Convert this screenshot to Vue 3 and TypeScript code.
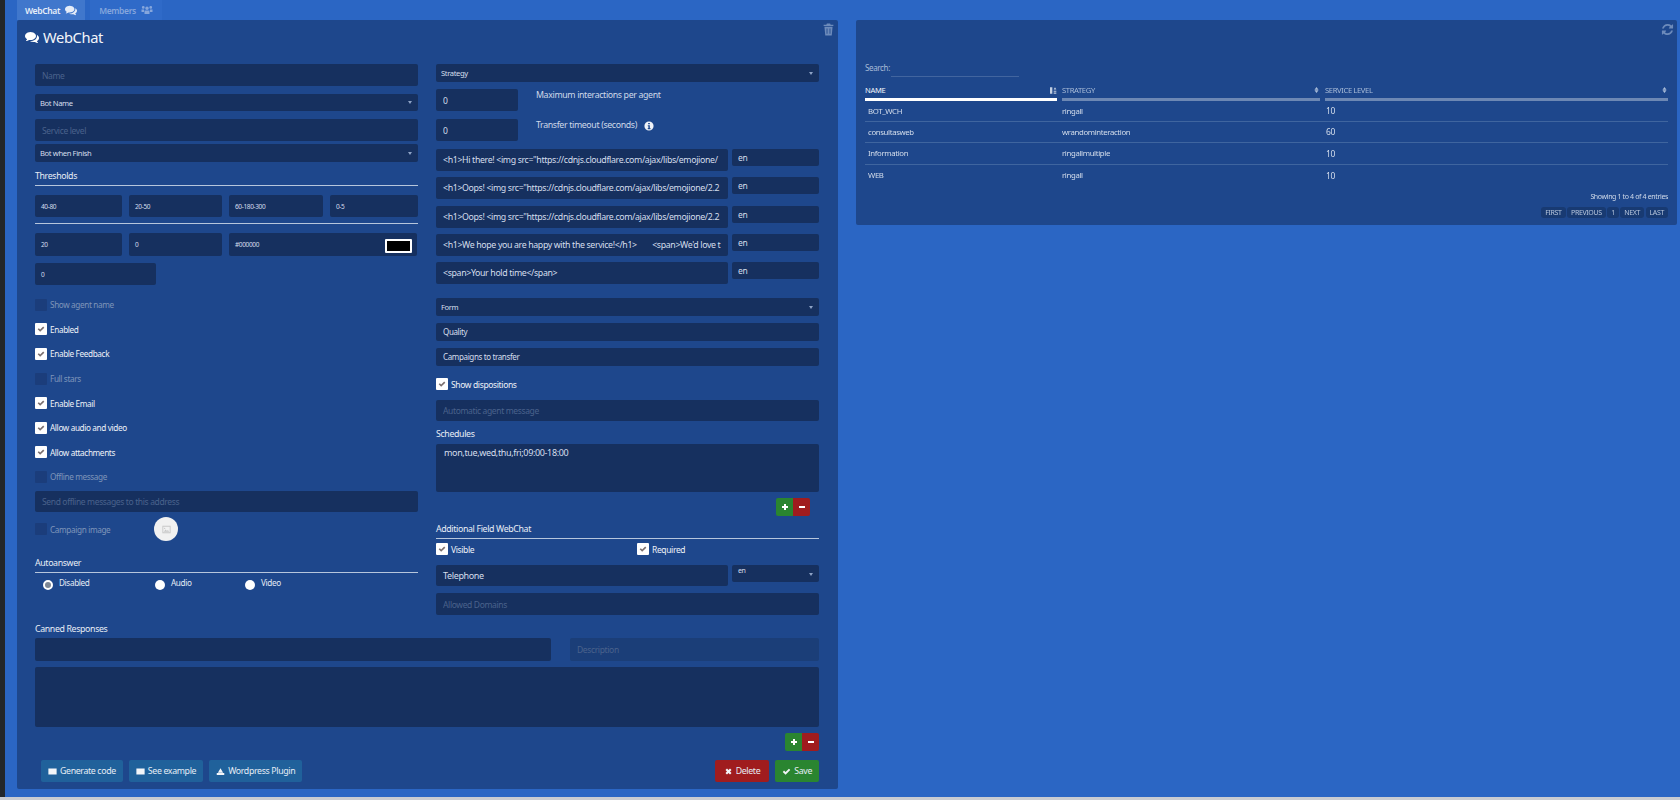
<template>
  <div class="page">
    <div class="strip"></div>
    <div class="main">
      <nav class="tabs">
        <a class="tab tab-active">
          WebChat
          <svg class="tab-icon" viewBox="0 0 1792 1792"><path :d="icons.comments" /></svg>
        </a>
        <a class="tab">
          Members
          <svg class="tab-icon" viewBox="0 0 24 24"><path :d="icons.users" /></svg>
        </a>
      </nav>

      <div class="panels">
        <section class="panel panel-form">
          <svg class="corner-icon trash" viewBox="0 0 24 24"><path fill-rule="evenodd" :d="icons.trash" /></svg>
          <h2 class="title">
            <svg viewBox="0 0 1792 1792"><path :d="icons.comments" /></svg>
            WebChat
          </h2>

          <div class="columns">
            <div class="column">
              <input class="field h22" placeholder="Name" />
              <div class="select h17 mt8"><span>Bot Name</span><i class="caret"></i></div>
              <input class="field h22 mt8" placeholder="Service level" />
              <div class="select h18 mt3"><span>Bot when Finish</span><i class="caret"></i></div>

              <h3 class="section thresholds">Thresholds</h3>
              <div class="limits mt9">
                <div v-for="v in thresholds" :key="v" class="tiny h22">{{ v }}</div>
              </div>
              <hr class="rule" />
              <div class="limits limits-color mt9">
                <div class="tiny h23">20</div>
                <div class="tiny h23">0</div>
                <div class="tiny h23 color-cell">#000000<span class="swatch"></span></div>
              </div>
              <div class="tiny h22 short mt7">0</div>

              <div class="checks">
                <label v-for="c in leftChecks" :key="c.label" class="check check-row" :class="{ off: !c.on }">
                  <span class="box">
                    <svg v-if="c.on" viewBox="0 0 24 24"><path :d="icons.check" /></svg>
                  </span>
                  {{ c.label }}
                </label>
              </div>

              <input class="field h21 offline" placeholder="Send offline messages to this address" />
              <div class="campaign">
                <label class="check off"><span class="box"></span>Campaign image</label>
                <span class="upload">
                  <svg viewBox="0 0 24 24"><path fill-rule="evenodd" :d="icons.picture" /></svg>
                </span>
              </div>

              <h3 class="section autoanswer">Autoanswer</h3>
              <div class="radios">
                <label v-for="r in radios" :key="r" class="radio">
                  <span class="dot" :class="{ chosen: r === 'Disabled' }"></span>{{ r }}
                </label>
              </div>
            </div>

            <div class="column">
              <div class="select h18"><span>Strategy</span><i class="caret"></i></div>
              <div class="numeric mt7">
                <input class="field h22" value="0" />
                <span>Maximum interactions per agent</span>
              </div>
              <div class="numeric mt8">
                <input class="field h22" value="0" />
                <span>Transfer timeout (seconds)
                  <svg class="info" viewBox="0 0 24 24"><path fill-rule="evenodd" :d="icons.info" /></svg>
                </span>
              </div>

              <div class="messages mt8">
                <div v-for="(m, i) in messages" :key="i" class="message">
                  <div class="field-text h22">{{ m }}</div>
                  <div class="lang">en</div>
                </div>
              </div>

              <div class="select h18 mt14"><span>Form</span><i class="caret"></i></div>
              <div class="field-text compact h18 mt7">Quality</div>
              <div class="field-text compact h18 mt7">Campaigns to transfer</div>
              <label class="check disp"><span class="box"><svg viewBox="0 0 24 24"><path :d="icons.check" /></svg></span>Show dispositions</label>
              <input class="field h21 mt9" placeholder="Automatic agent message" />

              <div class="label schedules">Schedules</div>
              <div class="area schedule-area">mon,tue,wed,thu,fri;09:00-18:00</div>
              <div class="pair pair-inset">
                <button class="mini green"><svg viewBox="0 0 24 24"><path :d="icons.plus" /></svg></button>
                <button class="mini red"><svg viewBox="0 0 24 24"><path :d="icons.minus" /></svg></button>
              </div>

              <h3 class="section additional">Additional Field WebChat</h3>
              <div class="visible">
                <label class="check"><span class="box"><svg viewBox="0 0 24 24"><path :d="icons.check" /></svg></span>Visible</label>
                <label class="check"><span class="box"><svg viewBox="0 0 24 24"><path :d="icons.check" /></svg></span>Required</label>
              </div>
              <div class="message mt9">
                <div class="field-text h21 big">Telephone</div>
                <div class="lang lang-select"><span>en</span><i class="caret"></i></div>
              </div>
              <input class="field h22 mt7" placeholder="Allowed Domains" />
            </div>
          </div>

          <div class="label canned">Canned Responses</div>
          <div class="canned-row">
            <div class="field-text h23"></div>
            <input class="field h23 faded" placeholder="Description" />
          </div>
          <div class="area canned-area"></div>
          <div class="pair pair-end">
            <button class="mini green"><svg viewBox="0 0 24 24"><path :d="icons.plus" /></svg></button>
            <button class="mini red"><svg viewBox="0 0 24 24"><path :d="icons.minus" /></svg></button>
          </div>

          <footer class="actions">
            <div class="action-group">
              <button class="btn teal"><svg viewBox="0 0 24 24"><path :d="icons.table" /></svg>Generate code</button>
              <button class="btn teal"><svg viewBox="0 0 24 24"><path :d="icons.table" /></svg>See example</button>
              <button class="btn teal"><svg viewBox="0 0 24 24"><path :d="icons.download" /></svg>Wordpress Plugin</button>
            </div>
            <div class="action-group">
              <button class="btn red btn-delete"><svg viewBox="0 0 24 24"><path :d="icons.cross" /></svg>Delete</button>
              <button class="btn green"><svg viewBox="0 0 24 24"><path :d="icons.check" /></svg>Save</button>
            </div>
          </footer>
        </section>

        <section class="panel panel-list">
          <svg class="corner-icon refresh" viewBox="0 0 1792 1792"><path :d="icons.refresh" /></svg>
          <div class="search"><span>Search:</span><span class="search-line"></span></div>
          <table class="list">
            <thead>
              <tr>
                <th class="col-name">
                  <div class="head active">NAME<svg viewBox="0 0 24 24"><path :d="icons.sortActive" /></svg></div>
                </th>
                <th class="col-strategy">
                  <div class="head">STRATEGY<svg viewBox="0 0 24 24"><path :d="icons.sort" /></svg></div>
                </th>
                <th>
                  <div class="head">SERVICE LEVEL<svg viewBox="0 0 24 24"><path :d="icons.sort" /></svg></div>
                </th>
              </tr>
            </thead>
            <tbody>
              <tr v-for="r in rows" :key="r.name">
                <td class="cell-name">{{ r.name }}</td>
                <td>{{ r.strategy }}</td>
                <td class="cell-level">{{ r.level }}</td>
              </tr>
            </tbody>
          </table>
          <div class="showing">Showing 1 to 4 of 4 entries</div>
          <div class="pager">
            <span v-for="p in pages" :key="p">{{ p }}</span>
          </div>
        </section>
      </div>
    </div>
    <div class="bottom"></div>
  </div>
</template>

<script setup lang="ts">
const icons: Record<string, string> = {
  comments:
    'M1408 768q0 139-94 257t-256.500 186.500-353.500 68.500q-86 0-176-16-124 88-278 128-36 9-86 16h-3q-11 0-20.500-8t-11.500-21q-1-3-1-6.500t.5-6.500 2-6l2.500-5 3.500-5.500 4-5 4.500-5 4-4.500q5-6 23-25t26-29.500 22.500-29 25-38.500 20.500-44q-124-72-195-177t-71-224q0-139 94-257t256.500-186.500 353.500-68.500 353.500 68.500 256.500 186.500 94 257zm384 256q0 120-71 224.500t-195 176.500q10 24 20.500 44t25 38.500 22.500 29 26 29.500 23 25q1 1 4 4.500t4.500 5 4 5 3.500 5.500l2.500 5 2 6 .5 6.500-1 6.500q-3 14-13 22t-22 7q-50-7-86-16-154-40-278-128-90 16-176 16-271 0-472-132 58 4 88 4 161 0 309-45t264-129q125-92 192-212t67-254q0-77-23-152 129 71 204 178t75 230z',
  users:
    'M12 5a3.500 3.500 0 110 7 3.500 3.500 0 010-7zM4.500 4a2.800 2.800 0 110 5.600 2.800 2.800 0 010-5.600zM19.500 4a2.800 2.800 0 110 5.600 2.800 2.800 0 010-5.600zM7 13h10v7H7zM1 11h5v5H1zM18 11h5v5h-5z',
  trash: 'M9 1h6l1 2h5v2.500H3V3h5zM4.500 7h15L18 23H6zM8.500 10v10H10V10zm5.500 0v10h1.500V10z',
  refresh:
    'M1639 1056q0 5-1 7-64 268-268 434.500t-478 166.500q-146 0-282.500-55t-243.500-157l-129 129q-19 19-45 19t-45-19-19-45v-448q0-26 19-45t45-19h448q26 0 45 19t19 45-19 45l-137 137q71 66 161 102t187 36q134 0 250-65t186-179q11-17 53-117 8-23 30-23h192q13 0 22.500 9.500t9.500 22.500zm25-800v448q0 26-19 45t-45 19h-448q-26 0-45-19t-19-45 19-45l138-138q-148-137-349-137-134 0-250 65t-186 179q-11 17-53 117-8 23-30 23h-199q-13 0-22.500-9.500t-9.500-22.500v-7q65-268 270-434.500t480-166.500q146 0 284 55.500t245 156.500l130-129q19-19 45-19t45 19 19 45z',
  info: 'M12 1a11 11 0 100 22 11 11 0 000-22zm-2 3.500h4v3.500h-4zM9 10h5v7h1.500v2.500h-6.500V17h1.500v-4.500H9z',
  picture: 'M3 4h18v16H3zM5 6v12h14V6zM6 17l4-5 3 3 2-2 3 4zM8 8a1.500 1.500 0 100 3 1.500 1.500 0 000-3z',
  check: 'M2 13l3.500-3.500 4 4L18.500 4.500 22 8 9.500 20.500z',
  cross: 'M4 8l4-4 4 4 4-4 4 4-4 4 4 4-4 4-4-4-4 4-4-4 4-4z',
  plus: 'M9 3h6v6h6v6h-6v6H9v-6H3V9h6z',
  minus: 'M3 9h18v6H3z',
  table: 'M1 4h22v16H1z',
  download: 'M12 3l7 12H5zM2 16h20v5H2z',
  sort: 'M12 2l7 9H5zM12 22l-7-9h14z',
  sortActive: 'M3 2h7v20H3zM14 9l4-7 4 7zM14 13h8v3h-8zM14 18h8v4h-8z',
}

const thresholds = ['40-80', '20-50', '60-180-300', '0-5']

const leftChecks = [
  { label: 'Show agent name', on: false },
  { label: 'Enabled', on: true },
  { label: 'Enable Feedback', on: true },
  { label: 'Full stars', on: false },
  { label: 'Enable Email', on: true },
  { label: 'Allow audio and video', on: true },
  { label: 'Allow attachments', on: true },
  { label: 'Offline message', on: false },
]

const radios = ['Disabled', 'Audio', 'Video']

const messages = [
  '<h1>Hi there! <img src="https://cdnjs.cloudflare.com/ajax/libs/emojione/',
  '<h1>Oops! <img src="https://cdnjs.cloudflare.com/ajax/libs/emojione/2.2',
  '<h1>Oops! <img src="https://cdnjs.cloudflare.com/ajax/libs/emojione/2.2',
  "<h1>We hope you are happy with the service!</h1>\u00a0\u00a0\u00a0\u00a0\u00a0\u00a0\u00a0\u00a0<span>We'd love t",
  '<span>Your hold time</span>',
]

const rows = [
  { name: 'BOT_WCH', strategy: 'ringall', level: 10 },
  { name: 'consultasweb', strategy: 'wrandominteraction', level: 60 },
  { name: 'Information', strategy: 'ringallmultiple', level: 10 },
  { name: 'WEB', strategy: 'ringall', level: 10 },
]

const pages = ['FIRST', 'PREVIOUS', '1', 'NEXT', 'LAST']
</script>

<style>
html,
body {
  margin: 0;
  overflow: hidden;
}
</style>

<style scoped>
.page {
  position: relative;
  display: flex;
  width: 1680px;
  height: 800px;
  overflow: hidden;
  background: #2b66c4;
  color: #e4ebf5;
  font-family: "Noto Sans", "Open Sans", sans-serif;
  font-size: 9px;
  letter-spacing: -0.04em;
}

.strip {
  width: 5px;
  flex: none;
  background: #23272b;
}

.bottom {
  position: absolute;
  left: 0;
  right: 0;
  bottom: 0;
  height: 3px;
  background: #c9ccd2;
}

.main {
  flex: 1;
  padding-left: 12px;
  filter: blur(0.4px);
}

.tabs {
  display: flex;
  gap: 5px;
  height: 20px;
}

.tab {
  display: flex;
  align-items: center;
  justify-content: center;
  gap: 5px;
  width: 68px;
  background: #2f6ac8;
  color: #85a6dc;
  font-weight: 600;
  font-size: 8.5px;
}

.tab:last-child {
  width: 72px;
}

.tab-active {
  background: #4077cc;
  color: #e6edf8;
}

.tab-icon {
  width: 12px;
  height: 12px;
  fill: currentColor;
}

.panels {
  display: flex;
  align-items: flex-start;
  gap: 18px;
}

.panel {
  position: relative;
  box-sizing: border-box;
  width: 821px;
  background: #1e478c;
  border-radius: 2px;
}

.panel-form {
  height: 769px;
  padding: 0 19px 0 18px;
}

.panel-list {
  height: 205px;
  padding: 0 9px 0 9px;
}

.corner-icon {
  position: absolute;
  fill: #6d8bbb;
}

.trash {
  top: 3px;
  right: 3px;
  width: 13px;
  height: 13px;
}

.refresh {
  top: 3px;
  right: 3px;
  width: 13px;
  height: 13px;
}

.title {
  display: flex;
  align-items: center;
  gap: 4px;
  height: 44px;
  margin: 0 0 0 -10px;
  padding-bottom: 11px;
  box-sizing: border-box;
  font-size: 14.7px;
  font-weight: 400;
  color: #f2f5fa;
}

.title svg {
  width: 14px;
  height: 14px;
  fill: #fff;
}

.columns {
  display: grid;
  grid-template-columns: 383px 383px;
  gap: 18px;
}

.column {
  display: flex;
  flex-direction: column;
  min-width: 0;
}

.field,
.field-text,
.select,
.lang,
.tiny,
.area {
  box-sizing: border-box;
  width: 100%;
  background: #16305f;
  border: 0;
  border-radius: 2px;
  color: #d5deec;
  font-family: inherit;
  letter-spacing: inherit;
}

.field,
.field-text {
  display: block;
  padding: 0 7px;
  font-size: 8.8px;
  line-height: 18px;
  outline: none;
  overflow: hidden;
  white-space: nowrap;
}

.field {
  font-size: 8.5px;
}

.field::placeholder {
  color: #4a628c;
  opacity: 1;
}

.field-text {
  display: flex;
  align-items: center;
  white-space: pre;
}

.compact {
  font-size: 8px;
}

.big {
  font-size: 9px;
}

.select {
  display: flex;
  align-items: center;
  justify-content: space-between;
  padding: 0 6px 0 5px;
  font-size: 7.6px;
  white-space: nowrap;
}

.caret {
  width: 0;
  height: 0;
  border-left: 2px solid transparent;
  border-right: 2px solid transparent;
  border-top: 3px solid #8ea3c5;
}

.tiny {
  display: flex;
  align-items: center;
  padding: 0 6px;
  font-size: 6.5px;
}

.short {
  width: 121px;
}

.h17 { height: 17px; }
.h18 { height: 18px; }
.h21 { height: 21px; }
.h22 { height: 22px; }
.h23 { height: 23px; }
.mt3 { margin-top: 3px; }
.mt7 { margin-top: 7px; }
.mt8 { margin-top: 8px; }
.mt9 { margin-top: 9px; }
.mt14 { margin-top: 14px; }

.section,
.label {
  margin: 0;
  font-size: 8.8px;
  font-weight: 400;
  line-height: 16px;
  color: #e9eef6;
}

.section {
  box-sizing: border-box;
  border-bottom: 1.5px solid #b7c6dc;
}

.thresholds {
  margin-top: 6px;
  height: 18px;
}

.autoanswer {
  margin-top: 14px;
  height: 18px;
}

.additional {
  margin-top: 5px;
  height: 18px;
}

.limits {
  display: grid;
  grid-template-columns: 87px 93px 94px 88px;
  gap: 7px;
}

.limits-color {
  grid-template-columns: 87px 93px 188px;
}

.color-cell {
  position: relative;
}

.swatch {
  position: absolute;
  top: 6px;
  right: 5px;
  box-sizing: border-box;
  width: 27px;
  height: 14px;
  background: #000;
  border: 2px solid #fff;
  border-radius: 1px;
}

.rule {
  width: 100%;
  margin: 6px 0 0;
  border: 0;
  border-top: 1.5px solid #b7c6dc;
}

.checks {
  display: flex;
  flex-direction: column;
  margin-top: 7.5px;
}

.offline {
  margin-top: 2px;
}

.check {
  display: flex;
  align-items: center;
  gap: 3px;
  font-size: 8.2px;
  color: #eef2f8;
}

.check-row {
  height: 24.6px;
}

.off {
  color: #7f95b9;
}

.box {
  display: flex;
  flex: none;
  align-items: center;
  justify-content: center;
  width: 12px;
  height: 12px;
  background: #fff;
  border-radius: 1px;
}

.off .box {
  background: #1b3d7b;
}

.box svg {
  width: 8px;
  height: 8px;
  fill: #7a6f6f;
}

.campaign {
  display: flex;
  align-items: center;
  height: 24px;
  margin-top: 5px;
}

.campaign .check {
  width: 119px;
}

.upload {
  display: flex;
  align-items: center;
  justify-content: center;
  width: 24px;
  height: 24px;
  background: #f1f1f1;
  border-radius: 50%;
}

.upload svg {
  width: 11px;
  height: 11px;
  fill: #c7c7c7;
}

.radios {
  display: flex;
  margin-top: 3px;
  padding-left: 8px;
}

.radio {
  display: flex;
  align-items: flex-start;
  gap: 6px;
  width: 112px;
  font-size: 8.2px;
  line-height: 13px;
  color: #e4ebf5;
}

.radio:last-child {
  width: auto;
}

.radio:nth-child(2) {
  width: 90px;
}

.dot {
  width: 10px;
  height: 10px;
  margin-top: 4px;
  background: #fff;
  border-radius: 50%;
}

.chosen {
  background: #7d8794;
  border: 2px solid #fff;
  box-sizing: border-box;
}

.numeric {
  display: flex;
  align-items: flex-start;
}

.numeric .field {
  flex: none;
  width: 82px;
}

.numeric span {
  display: flex;
  align-items: center;
  gap: 7px;
  margin: 0 0 0 18px;
  font-size: 8.8px;
  line-height: 13px;
  color: #cfd9e9;
}

.info {
  width: 10px;
  height: 10px;
  fill: #f0f3f8;
}

.messages {
  display: flex;
  flex-direction: column;
  gap: 6.25px;
}

.message {
  display: grid;
  grid-template-columns: 292px 87px;
  gap: 4px;
  align-items: start;
}

.lang {
  display: flex;
  align-items: center;
  justify-content: space-between;
  height: 17px;
  padding: 0 6px;
  font-size: 8.5px;
}

.lang-select {
  font-size: 7px;
  align-items: flex-start;
  line-height: 12px;
}

.lang-select .caret {
  margin-top: 8px;
}

.disp {
  height: 14px;
  margin-top: 11px;
  font-size: 8.5px;
}

.schedules {
  margin-top: 5px;
}

.area {
  padding: 2px 8px;
  font-size: 9px;
  line-height: 14px;
}

.schedule-area {
  height: 48px;
  margin-top: 2px;
  padding-top: 2px;
}

.pair {
  display: flex;
  justify-content: flex-end;
  margin-top: 6px;
}

.pair-inset {
  padding-right: 9px;
}

.mini {
  display: flex;
  align-items: center;
  justify-content: center;
  width: 17px;
  height: 18px;
  padding: 0;
  border: 0;
}

.mini svg {
  width: 8px;
  height: 8px;
  fill: #fff;
}

.mini:first-child {
  border-radius: 2px 0 0 2px;
}

.mini:last-child {
  border-radius: 0 2px 2px 0;
}

.green {
  background: #2a8530;
}

.red {
  background: #a01c1e;
}

.teal {
  background: #20619b;
}

.visible {
  display: grid;
  grid-template-columns: 201px 1fr;
  margin-top: 3px;
}

.visible .check {
  height: 14px;
  font-size: 8.5px;
}

.canned {
  margin-top: 6px;
}

.canned-row {
  display: grid;
  grid-template-columns: 516px 249px;
  gap: 19px;
  margin-top: 1px;
}

.faded {
  background: #1b3e78;
}

.canned-area {
  height: 60px;
  margin-top: 6px;
}

.pair-end {
  margin-top: 6px;
}

.actions {
  display: flex;
  justify-content: space-between;
  margin-top: 9px;
  padding-left: 6px;
}

.action-group {
  display: flex;
  gap: 6px;
}

.btn {
  display: flex;
  align-items: center;
  gap: 3px;
  height: 22px;
  padding: 0 7px;
  border: 0;
  border-radius: 2px;
  color: #e6edf6;
  font-family: inherit;
  font-size: 8.8px;
  letter-spacing: inherit;
}

.btn-delete {
  padding: 0 9px;
}

.btn svg {
  width: 9px;
  height: 9px;
  fill: #f2f5f9;
}

.search {
  display: flex;
  align-items: flex-end;
  height: 57px;
  color: #a9bcd8;
  font-size: 8px;
  line-height: 13px;
}

.search span:first-child {
  padding-bottom: 3px;
}

.search-line {
  width: 128px;
  height: 1px;
  margin-left: 1px;
  background: #42659f;
}

.list {
  width: 803px;
  margin-top: 3px;
  border-collapse: collapse;
  table-layout: fixed;
  font-size: 7.8px;
}

.col-name {
  width: 197px;
}

.col-strategy {
  width: 263px;
}

th {
  box-sizing: border-box;
  padding: 0 5px 0 0;
  font-weight: 400;
  text-align: left;
}

th:last-child {
  padding-right: 0;
}

.head {
  display: flex;
  align-items: center;
  justify-content: space-between;
  box-sizing: border-box;
  height: 21px;
  padding-top: 2px;
  border-bottom: 3px solid #6d88b4;
  color: #a9bcd8;
  font-size: 7.6px;
}

.head svg {
  width: 7px;
  height: 8px;
  fill: #a9bcd8;
}

.active {
  border-bottom-color: #fff;
  color: #f2f5fa;
}

.active svg {
  width: 8px;
  height: 9px;
  fill: #c4d0e2;
}

td {
  box-sizing: border-box;
  height: 21.5px;
  padding: 0;
  border-bottom: 1px solid #3f659f;
  color: #d5deec;
}

tr:first-child td {
  height: 20px;
}

tr:last-child td {
  border-bottom: 0;
}

.cell-name {
  padding-left: 3px;
}

.cell-level {
  padding-left: 1px;
  font-size: 8.5px;
}

.showing {
  margin-top: 5px;
  text-align: right;
  color: #cfd9e9;
  font-size: 7px;
  line-height: 11px;
}

.pager {
  display: flex;
  justify-content: flex-end;
  gap: 1.5px;
  margin-top: 5px;
}

.pager span {
  display: flex;
  align-items: center;
  height: 11px;
  padding: 0 4px;
  background: #183a72;
  border-radius: 3px;
  color: #b7c6dc;
  font-size: 7px;
}
</style>
